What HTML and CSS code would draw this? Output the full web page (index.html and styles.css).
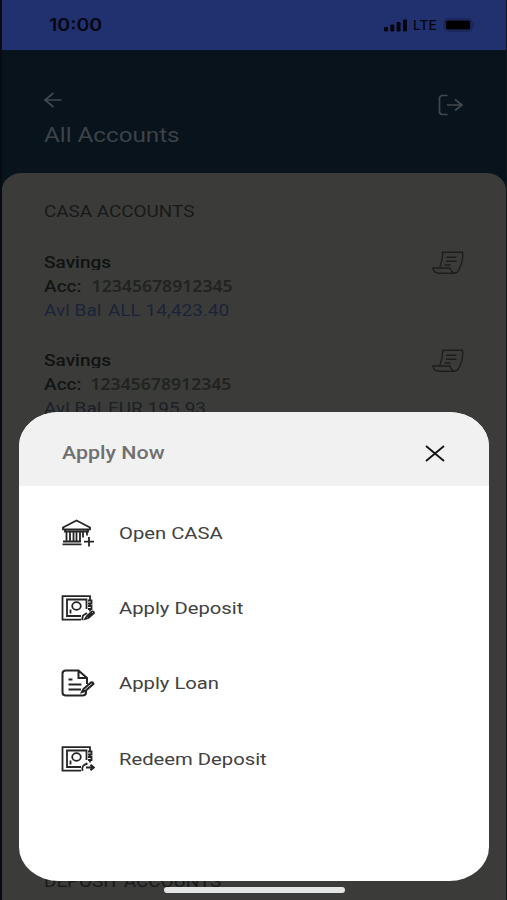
FILE: index.html
```html
<!DOCTYPE html>
<html lang="en">
<head>
<meta charset="utf-8">
<title>All Accounts</title>
<link rel="stylesheet" href="styles.css">
</head>
<body>
<svg class="defs" width="0" height="0" aria-hidden="true">
  <symbol id="statement" viewBox="0 0 32 24">
    <path d="M8 16C9.500 11.500 11 6.500 10.500 1.200h20c.8 6-.8 12.500-4 18.300-.9 1.900-2.600 2.700-4.500 2.700H7.500C3.500 22.200 1.200 20 1 17h16.800c1.200 3 3 4.800 5.200 5.200M14.500 6.200h10M14 10.200h10.500M12.500 14h6"/>
  </symbol>
  <symbol id="safe" viewBox="0 0 34 28">
    <path d="M29 6V2.200H1.500v23.500H20M20 22H6V5.500h19.500V15"/>
    <ellipse cx="15.500" cy="12" rx="4.300" ry="3.800"/>
    <path d="M9.500 15.500v4M27 6.500h3.500v3H27M27 12h3.500v3H27M29 9.500V12M29 15v2.500"/>
  </symbol>
</svg>
<main class="screen">
  <div class="status">
    <span class="time">10:00</span>
    <span class="indicators">
      <svg class="signal" width="24" height="13" viewBox="0 0 24 13"><rect x="0" y="8" width="4" height="4.500" rx="1"/><rect x="6.300" y="5.500" width="4" height="7" rx="1"/><rect x="12.600" y="3" width="4" height="9.500" rx="1"/><rect x="19" y="0.500" width="4" height="12" rx="1"/></svg>
      <span class="network">LTE</span>
      <svg class="battery" width="32" height="14" viewBox="0 0 32 14"><rect class="case" x="1" y="1" width="28" height="12" rx="3.500"/><rect x="2.800" y="2.500" width="24.500" height="9" rx="2"/><path class="tip" d="M30.500 5v4"/></svg>
    </span>
  </div>
  <header class="header">
    <div>
      <svg class="back" width="18" height="16" viewBox="0 0 18 16"><path d="M17.500 8H1M9.500 1L1 8l8.500 7"/></svg>
      <h1 class="title">All Accounts</h1>
    </div>
    <svg class="logout" width="26" height="22" viewBox="0 0 26 22"><path d="M9.500 1.500H4.500Q1.500 1.500 1.500 4.500v13q0 3 3 3h5M9 11h15M17 5.500l7 5.500-7 5.500"/></svg>
  </header>
  <section class="accounts">
    <h2 class="group">CASA ACCOUNTS</h2>
    <article class="account">
      <div class="details">
        <h3 class="name">Savings</h3>
        <p class="number"><span class="label">Acc:</span><span class="digits">12345678912345</span></p>
        <p class="balance">Avl Bal <span class="amount">ALL 14,423.40</span></p>
      </div>
      <svg class="statement" width="32" height="24"><use href="#statement"/></svg>
    </article>
    <article class="account second">
      <div class="details">
        <h3 class="name">Savings</h3>
        <p class="number"><span class="label">Acc:</span><span class="digits">12345678912345</span></p>
        <p class="balance muted">Avl Bal <span class="amount">EUR 195.93</span></p>
      </div>
      <svg class="statement" width="32" height="24"><use href="#statement"/></svg>
    </article>
    <h2 class="group deposits">DEPOSIT ACCOUNTS</h2>
  </section>
  <section class="dialog">
    <header class="dialog-head">
      <h2 class="dialog-title">Apply Now</h2>
      <svg class="close" width="20" height="17" viewBox="0 0 20 17"><path d="M1 1l18 15M19 1L1 16"/></svg>
    </header>
    <ul class="menu">
      <li class="item">
        <svg class="icon" width="34" height="28" viewBox="0 0 34 28"><path d="M2 8.500L15.500 1.500 29 8.500v1.800H2zM4 10.500v2h23v-2M5.500 12.500v10M9 12.500v10M12.500 12.500v10M15.500 12.500v10M19 12.500v10M22 12.500v6M26 12.500v4M2 22.500h18M1.500 25.300h19M28 18v9.500M23 22.700h10"/></svg>
        <span class="text">Open CASA</span>
      </li>
      <li class="item">
        <svg class="icon" width="34" height="28" viewBox="0 0 34 28"><use href="#safe"/><path d="M26 22l5-4.500q2-.5 2 1.500l-5.500 5-3.500 1zM21 26l1-4.500 4-2.500"/><path class="heavy" d="M26.500 23l5-4"/></svg>
        <span class="text">Apply Deposit</span>
      </li>
      <li class="item">
        <svg class="icon loan" width="34" height="28" viewBox="0 0 34 28"><path d="M25 22v1.500q0 3-3.500 3H5q-3.500 0-3.500-3V4.500q0-3 3.500-3h12.500L26 9v6M17.500 1.500V9H26M7.500 10.500h4M7.500 15.500h13M7.500 20.500h12.500M22.500 20l7.500-6.500q2-.5 2.500 1.300l-8 7-3.500 1.200z"/></svg>
        <span class="text">Apply Loan</span>
      </li>
      <li class="item">
        <svg class="icon" width="34" height="28" viewBox="0 0 34 28"><use href="#safe"/><path d="M21.500 26q-1.500-6 5-7.500"/><path class="heavy" d="M25 22.500h7.500M29.500 19.800l3 2.700-3 2.700"/></svg>
        <span class="text">Redeem Deposit</span>
      </li>
    </ul>
  </section>
  <div class="home-bar"></div>
</main>
</body>
</html>
```

FILE: styles.css
```css
* { box-sizing: border-box; }
body { margin: 0; background: #09131c; font-family: Roboto, "Liberation Sans", sans-serif; }
h1, h2, h3, p, ul { margin: 0; padding: 0; font-weight: 400; }
ul { list-style: none; }
svg { display: block; fill: none; flex: none; }
.defs { position: absolute; }
.screen { position: relative; width: 507px; height: 900px; overflow: hidden; display: flex; flex-direction: column; background: #09131c; border-left: 2px solid #070c12; border-right: 1px solid #10171c; }

.status { height: 50px; flex: none; display: flex; align-items: center; justify-content: space-between; padding: 0 31px 0 47px; background: #21306e; color: #05070f; }
.time { font: 600 17px/20px Inter, sans-serif; transform: scaleX(1.15); transform-origin: left; }
.indicators { display: flex; align-items: center; }
.signal { fill: #05070f; }
.network { width: 30px; margin-left: 5px; font: 500 13px/16px Inter, sans-serif; transform: scaleX(1.06); transform-origin: left; }
.battery { fill: #000; }
.case { fill: none; stroke: #17214e; }
.tip { stroke: #17214e; }

.header { height: 123px; flex: none; display: flex; justify-content: space-between; padding: 42px 42px 0 42px; }
.back, .logout { stroke: #41494e; stroke-width: 1.7; }
.logout { margin-top: 2px; }
.title { margin-top: 15px; font-size: 20px; line-height: 24px; color: #3c4347; white-space: nowrap; transform: scaleX(1.21); transform-origin: left; }

.accounts { flex: 1; padding: 29px 42px 0; background: #3b3c39; border-radius: 20px 20px 0 0 / 17px 17px 0 0; }
.group { font-size: 16px; line-height: 20px; color: #171918; white-space: nowrap; transform: scaleX(1.18); transform-origin: left; }
.account { display: flex; justify-content: space-between; margin-top: 30px; height: 74px; }
.second { margin-top: 24px; }
.details { transform: scaleX(1.19); transform-origin: left; white-space: nowrap; font-size: 16px; line-height: 24px; }
.name { height: 18px; overflow: hidden; font-size: 16px; line-height: 21px; font-weight: 500; color: #101211; }
.number { display: flex; height: 24px; margin-top: 5px; font-weight: 500; color: #131514; }
.label { width: 40px; }
.digits { font: 600 16px/22px "Noto Sans", sans-serif; color: #212321; transform: scaleX(.925); transform-origin: left; }
.second .digits { margin-left: -1px; }
.balance { color: #1b2338; }
.muted { color: #1b1f27; }
.amount { margin-left: 1.5px; }
.statement { margin-top: -1px; stroke: #1c1e1c; stroke-width: 1.4; }
.deposits { margin-top: 448px; }

.dialog { position: absolute; left: 17px; top: 412px; width: 470px; height: 469px; overflow: hidden; background: #fff; border-radius: 40px / 34px; }
.dialog-head { height: 74px; display: flex; align-items: center; justify-content: space-between; padding: 8px 44px 0 43px; background: #f1f1f1; }
.dialog-title { font-size: 18px; line-height: 22px; font-weight: 500; color: #707070; transform: scaleX(1.19); transform-origin: left; }
.close { stroke: #111; stroke-width: 1.8; }
.menu { padding: 9px 42px; }
.item { height: 75.3px; display: flex; align-items: center; gap: 24px; }
.icon { stroke: #252525; stroke-width: 1.8; }
.loan { stroke-width: 2; }
.heavy { stroke-width: 2.2; }
.text { font-size: 17px; line-height: 22px; color: #414141; white-space: nowrap; transform: scaleX(1.19); transform-origin: left; }

.home-bar { position: absolute; left: 162px; top: 887px; width: 181px; height: 6px; border-radius: 3px; background: #e4e6e5; }
```
